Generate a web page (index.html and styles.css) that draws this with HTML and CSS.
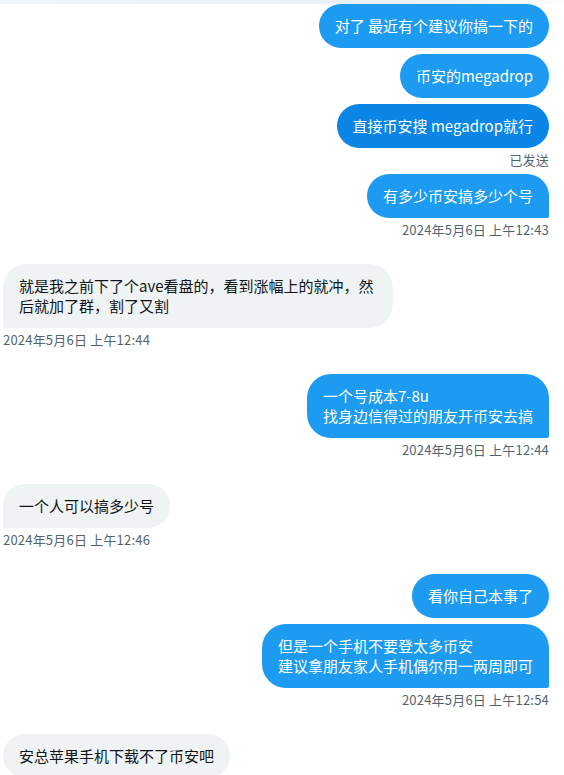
FILE: index.html
```html
<!DOCTYPE html>
<html lang="zh-CN">
<head>
  <meta charset="UTF-8" />
  <meta name="viewport" content="width=device-width, initial-scale=1.0" />
  <title>Messages</title>
  <link rel="stylesheet" href="styles.css">
</head>
<body>
  <div class="topbar"></div>
  <div class="thread">
    <div class="group sent">
      <div class="bubble">对了 最近有个建议你搞一下的</div>
      <div class="bubble">币安的megadrop</div>
      <div class="bubble active">直接币安搜 megadrop就行</div>
      <div class="meta">已发送</div>
      <div class="bubble last">有多少币安搞多少个号</div>
      <div class="meta">2024年5月6日 上午12:43</div>
    </div>

    <div class="group received">
      <div class="bubble last">就是我之前下了个ave看盘的，看到涨幅上的就冲，然后就加了群，割了又割</div>
      <div class="meta">2024年5月6日 上午12:44</div>
    </div>

    <div class="group sent">
      <div class="bubble last">一个号成本7-8u<br>找身边信得过的朋友开币安去搞</div>
      <div class="meta">2024年5月6日 上午12:44</div>
    </div>

    <div class="group received">
      <div class="bubble last">一个人可以搞多少号</div>
      <div class="meta">2024年5月6日 上午12:46</div>
    </div>

    <div class="group sent">
      <div class="bubble">看你自己本事了</div>
      <div class="bubble last">但是一个手机不要登太多币安<br>建议拿朋友家人手机偶尔用一两周即可</div>
      <div class="meta">2024年5月6日 上午12:54</div>
    </div>

    <div class="group received">
      <div class="bubble">安总苹果手机下载不了币安吧</div>
    </div>
  </div>
</body>
</html>
```

FILE: styles.css
```css
body {
  margin: 0;
  background: #fff;
  font-family: "Noto Sans CJK SC", "Noto Sans", sans-serif;
  color: #0f1419;
  overflow: hidden;
}
.topbar {
  height: 4px;
  background: linear-gradient(to right, #f3f6f9, #eaf0f6 70%, #fbfcfd);
}
.thread {
  padding: 0 15px 0 3px;
}
.group {
  display: flex;
  flex-direction: column;
  gap: 6px;
  margin-bottom: 26px;
}
.sent { align-items: flex-end; }
.received { align-items: flex-start; }
.bubble {
  font-size: 15px;
  line-height: 20px;
  padding: 12px 16px;
  border-radius: 24px;
  max-width: 390px;
  box-sizing: border-box;
}
.sent .bubble {
  background: #1d9bf0;
  color: #fff;
}
.sent .bubble.active {
  background: #0b86e6;
}
.sent .bubble.last { border-bottom-right-radius: 2px; }
.received .bubble {
  background: #eff3f4;
  color: #0f1419;
}
.received .bubble.last { border-bottom-left-radius: 2px; }
.meta {
  font-size: 13px;
  line-height: 16px;
  letter-spacing: 0.2px;
  color: #536471;
  margin-top: -2px;
}
```
